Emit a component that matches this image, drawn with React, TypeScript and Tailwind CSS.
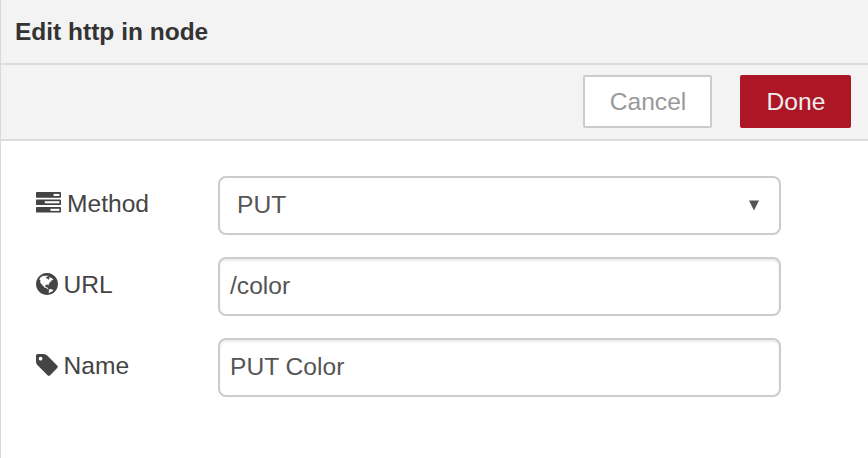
import type { ReactNode } from 'react';

const TAG =
  'M576 448q0-53-37.5-90.5t-90.5-37.5-90.5 37.5-37.5 90.5 37.5 90.5 90.5 37.5 90.5-37.5 37.5-90.5zm1067 576q0 53-37 90l-491 492q-39 37-91 37-53 0-90-37l-715-716q-38-37-64.5-101t-26.5-117v-416q0-52 38-90t90-38h416q53 0 117 26.5t102 64.5l715 714q37 39 37 91z';
const GLOBE =
  'M896 128q209 0 385.5 103t279.5 279.5 103 385.5-103 385.5-279.5 279.5-385.5 103-385.5-103-279.5-279.5-103-385.5 103-385.5 279.5-279.5 385.5-103zm274 521q-2 1-9.5 9.5t-13.5 9.5q2 0 4.5-5t5-11 3.5-7q6-7 22-15 14-6 52-12 34-8 51 11-2-2 9.5-13t14.5-12q3-2 15-4.5t15-7.5l2-22q-12 1-17.5-7t-6.5-21q0 2-6 8 0-7-4.5-8t-11.5 1-9 1q-10-3-15-7.5t-8-16.5-4-15q-2-5-9.5-11t-9.5-10q-1-2-2.5-5.5t-3-6.5-4-5.5-5.5-2.5-7 5-7.5 10-4.5 5q-3-2-6-1.5t-4.5 1-4.5 3-5 3.5q-3 2-8.5 3t-8.5 2q15-5-1-11-10-4-16-3 9-4 7.5-12t-8.5-14h5q-1-4-8.5-8.5t-17.5-8.5-13-6q-8-5-34-9.5t-33-.5q-5 6-4.5 10.5t4 14 3.5 12.5q1 6-5.5 13t-6.5 12q0 7 14 15.5t10 21.5q-3 8-16 16t-16 12q-5 8-1.5 18.5t10.5 16.5q2 2 1.5 4t-3.5 4.5-5.5 4-6.5 3.5l-3 2q-11 5-20.5-6t-13.5-26q-7-25-16-30-23-8-29 1-5-13-41-26-25-9-58-4 6-1 0-15-7-15-19-12 3-6 4-17.5t1-13.5q3-13 12-23 1-1 7-8.5t9.5-13.5.5-6q35 4 50-11 5-5 11.5-17t10.5-17q9-6 14-5.5t14.5 5.5 14.5 5q14 1 15.5-11t-7.5-20q12 1 3-17-4-7-8-9-12-4-27 5-8 4 2 8-1-1-9.5 10.5t-16.5 17.5-16-5q-1-1-5.5-13.5t-9.5-13.5q-8 0-16 15 3-8-11-15t-24-8q19-12-8-27-7-4-20.5-5t-19.5 4q-5 7-5.5 11.5t5 8 10.5 5.5 11.5 4 8.5 3q14 10 8 14-2 1-8.5 3.5t-11.5 4.5-6 4q-3 4 0 14t-2 14q-5-5-9-17.5t-7-16.5q7 9-25 6l-10-1q-4 0-16 2t-20.5 1-13.5-8q-4-8 0-20 1-4 4-2-4-3-11-9.5t-10-8.5q-46 15-94 41 6 1 12-1 5-2 13-6.5t10-5.5q34-14 42-7l5-5q14 16 20 25-7-4-30-1-20 6-22 12 7 12 5 18-4-3-11.5-10t-14.5-11-15-5q-16 0-22 1-146 80-235 222 7 7 12 8 4 1 5 9t2.5 11 11.5-3q9 8 3 19 1-1 44 27 19 17 21 21 3 11-10 18-1-2-9-9t-9-4q-3 5 .5 18.5t10.5 12.5q-7 0-9.5 16t-2.5 35.5-1 23.5l2 1q-3 12 5.5 34.5t21.5 19.5q-13 3 20 43 6 8 8 9 3 2 12 7.5t15 10 10 10.5q4 5 10 22.5t14 23.5q-2 6 9.5 20t10.5 23q-1 0-2.5 1t-2.5 1q3 7 15.5 14t15.5 13q1 3 2 10t3 11 8 2q2-20-24-62-15-25-17-29-3-5-5.5-15.5t-4.5-14.5q2 0 6 1.5t8.5 3.5 7.5 4 2 3q-3 7 2 17.5t12 18.5 17 19 12 13q6 6 14 19.5t0 13.5q9 0 20 10t17 20q5 8 8 26t5 24q2 7 8.5 13.5t12.5 9.5l16 8 13 7q5 2 18.5 10.5t21.5 11.5q10 4 16 4t14.5-2.5 13.5-3.5q15-2 29 15t21 21q36 19 55 11-2 1 .5 7.5t8 15.5 9 14.5 5.5 8.5q5 6 18 15t18 15q6-4 7-9-3 8 7 20t18 10q14-3 14-32-31 15-49-18 0-1-2.5-5.5t-4-8.5-2.5-8.5 0-7.5 5-3q9 0 10-3.5t-2-12.5-4-13q-1-8-11-20t-12-15q-5 9-16 8t-16-9q0 1-1.5 5.5t-1.5 6.5q-13 0-15-1 1-3 2.5-17.5t3.5-22.5q1-4 5.5-12t7.5-14.5 4-12.5-4.5-9.5-17.5-2.5q-19 1-26 20-1 3-3 10.5t-5 11.5-9 7q-7 3-24 2t-24-5q-13-8-22.5-29t-9.5-37q0-10 2.5-26.5t3-25-5.5-24.5q3-2 9-9.5t10-10.5q2-1 4.5-1.5t4.5 0 4-1.5 3-6q-1-1-4-3-3-3-4-3 7 3 28.5-1.5t27.5 1.5q15 11 22-2 0-1-2.5-9.5t-.5-13.5q5 27 29 9 3 3 15.5 5t17.5 5q3 2 7 5.5t5.5 4.5 5-.5 8.5-6.5q10 14 12 24 11 40 19 44 7 3 11 2t4.5-9.5 0-14-1.5-12.5l-1-8v-18l-1-8q-15-3-18.5-12t1.5-18.5 15-18.5q1-1 8-3.5t15.5-6.5 12.5-8q21-19 15-35 7 0 11-9-1 0-5-3t-7.5-5-4.5-2q9-5 2-16 5-3 7.5-11t7.5-10q9 12 21 2 7-8 1-16 5-7 20.5-10.5t18.5-9.5q7 2 8-2t1-12 3-12q4-5 15-9t13-5l17-11q3-4 0-4 18 2 31-11 10-11-6-20 3-6-3-9.5t-15-5.5q3-1 11.5-.5t10.5-1.5q15-10-7-16-17-5-43 12zm-163 877q206-36 351-189-3-3-12.5-4.5t-12.5-3.5q-18-7-24-8 1-7-2.5-13t-8-9-12.5-8-11-7q-2-2-7-6t-7-5.5-7.5-4.5-8.5-2-10 1l-3 1q-3 1-5.5 2.5t-5.5 3-4 3 0 2.5q-21-17-36-22-5-1-11-5.5t-10.5-7-10-1.5-11.5 7q-5 5-6 15t-2 13q-7-5 0-17.5t2-18.5q-3-6-10.5-4.5t-12 4.5-11.5 8.5-9 6.5-8.5 5.5-8.5 7.5q-3 4-6 12t-5 11q-2-4-11.5-6.5t-9.5-5.5q2 10 4 35t5 38q7 31-12 48-27 25-29 40-4 22 12 26 0 7-8 20.5t-7 21.5q0 6 2 16z';

function Row({ icon, label, children }: { icon: ReactNode; label: string; children: ReactNode }) {
  return (
    <div className="flex h-[59px] items-center">
      <label className="flex w-[182px] items-center pb-[6px] text-[#444]">
        {icon}
        <span className="pt-[2px]">{label}</span>
      </label>
      {children}
    </div>
  );
}

const input =
  'h-[59px] w-[563px] rounded-[8px] border-2 border-[#ccc] bg-white pt-0 pb-[1px] pl-[10px] text-[#555] outline-none shadow-[inset_0_2px_2px_rgba(0,0,0,0.075)]';

export default function App() {
  return (
    <div className="h-[458px] w-[868px] overflow-hidden border-l border-[#d9d9d9] bg-white font-['Liberation_Sans',Arial,sans-serif] text-[24.6px] leading-[36px]">
      <header className="flex h-[65px] items-center border-b-2 border-[#dcdcdc] bg-[#f3f3f3] pl-[14px] text-[24.5px] font-bold text-[#333]">
        <h1>Edit http in node</h1>
      </header>
      <div className="flex h-[76px] justify-end gap-7 border-b-2 border-[#dcdcdc] bg-[#f3f3f3] pt-[10px] pr-[17px]">
        <button className="h-[53px] w-[129px] rounded-[2px] border-2 border-[#ccc] bg-white pl-[1px] text-[#999]">Cancel</button>
        <button className="h-[53px] w-[111px] rounded-[2px] bg-[#ad1625] pl-[1px] text-[#eee]">Done</button>
      </div>
      <main className="flex flex-col gap-[22px] pt-[35px] pl-[35px]">
        <Row
          label="Method"
          icon={
            <svg viewBox="0 0 25 21" className="mr-[6px] h-[21px] w-[25px]">
              <g fill="#444">
                <rect y="0.1" width="25" height="5.6" rx="0.9" />
                <rect y="7.5" width="25" height="5.6" rx="0.9" />
                <rect y="15" width="25" height="5.6" rx="0.9" />
              </g>
              <g fill="#fff">
                <rect x="17.6" y="1.9" width="5.8" height="2.1" />
                <rect x="8.8" y="9.2" width="14.6" height="2.1" />
                <rect x="14.4" y="16.8" width="9" height="2.1" />
              </g>
            </svg>
          }
        >
          <div className="flex h-[59px] w-[563px] items-center justify-between rounded-[8px] border-2 border-[#ccc] bg-white pr-5 pb-[1px] pl-[17px] text-[#555]">
            <span>PUT</span>
            <svg viewBox="0 0 10 11" className="h-[11px] w-[10px] fill-[#555]">
              <path d="M0 0.5h10L5 10.5z" />
            </svg>
          </div>
        </Row>
        <Row
          label="URL"
          icon={
            <svg viewBox="128 0 1536 1792" className="mr-[5.5px] h-[26px] w-[22px] fill-current">
              <path d={GLOBE} />
            </svg>
          }
        >
          <input className={input} defaultValue="/color" />
        </Row>
        <Row
          label="Name"
          icon={
            <svg viewBox="128 0 1536 1792" className="mr-[5.5px] h-[26px] w-[22px] fill-current">
              <path d={TAG} />
            </svg>
          }
        >
          <input className={input} defaultValue="PUT Color" />
        </Row>
      </main>
    </div>
  );
}
